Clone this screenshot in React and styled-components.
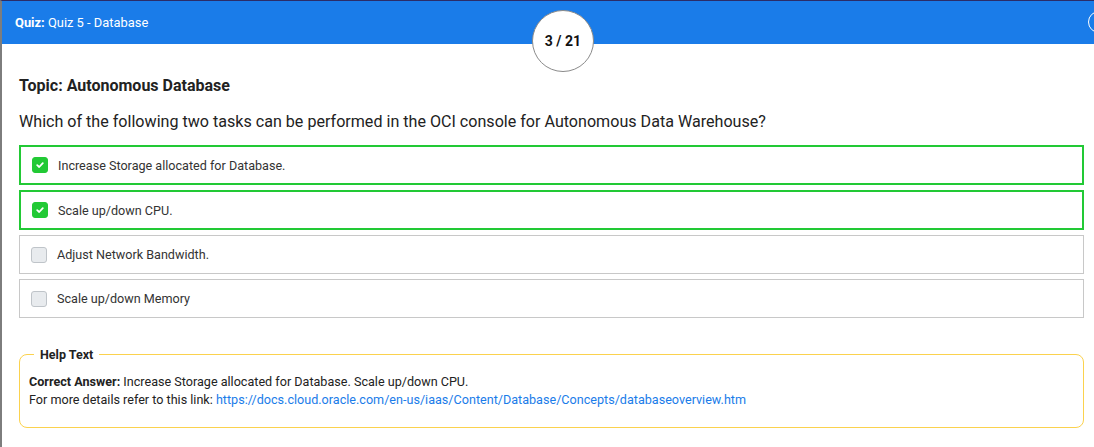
import React from 'react'
import styled, { createGlobalStyle } from 'styled-components'

const GlobalStyle = createGlobalStyle`
    body {
        margin: 0;
        font-family: Roboto, "Liberation Sans", sans-serif;
        background: #ffffff;
        overflow: hidden;
    }
`

const options = [
    { text: 'Increase Storage allocated for Database.', correct: true },
    { text: 'Scale up/down CPU.', correct: true },
    { text: 'Adjust Network Bandwidth.', correct: false },
    { text: 'Scale up/down Memory', correct: false },
]

function Check() {
    return (
        <svg width="10" height="10" viewBox="0 0 10 10">
            <path d="M2.2 5.2 L4.2 7 L7.8 3.2" fill="none" stroke="#fff" strokeWidth="1.8" strokeLinecap="round" strokeLinejoin="round" />
        </svg>
    )
}

function App() {
    return (
        <Page>
            <GlobalStyle />
            <Header>
                <Title><b>Quiz:</b> Quiz 5 - Database</Title>
                <Close />
                <Counter>3 / 21</Counter>
            </Header>
            <Body>
                <Topic>Topic: Autonomous Database</Topic>
                <Question>Which of the following two tasks can be performed in the OCI console for Autonomous Data Warehouse?</Question>
                <Options>
                    {options.map((o) => (
                        <Option key={o.text} correct={o.correct}>
                            <Box correct={o.correct}>{o.correct && <Check />}</Box>
                            <span>{o.text}</span>
                        </Option>
                    ))}
                </Options>
                <Help>
                    <Legend>Help Text</Legend>
                    <HelpLine><b>Correct Answer:</b> Increase Storage allocated for Database. Scale up/down CPU.</HelpLine>
                    <HelpLine>
                        For more details refer to this link:{' '}
                        <Link href="#">https://docs.cloud.oracle.com/en-us/iaas/Content/Database/Concepts/databaseoverview.htm</Link>
                    </HelpLine>
                </Help>
            </Body>
        </Page>
    )
}

export default App

const Page = styled.div`
    height: 446px;
    border-top: 1px solid #2b2c68;
    border-left: 2px solid #7d7d7d;
    background: #fff;
`

const Header = styled.div`
    position: relative;
    height: 43px;
    background-color: #1a7ce9;
    display: flex;
    align-items: center;
    justify-content: space-between;
    padding-left: 13px;
`

const Title = styled.div`
    color: #fff;
    font-size: 12.9px;
    b {
        font-weight: 700;
    }
`

const Close = styled.div`
    width: 20px;
    height: 20px;
    border: 1.5px solid #fff;
    border-radius: 50%;
    margin-right: -16px;
    margin-top: -1px;
`

const Counter = styled.div`
    position: absolute;
    left: 530px;
    top: 9px;
    width: 62px;
    height: 62px;
    box-sizing: border-box;
    border-radius: 50%;
    border: 1px solid #8a8a8a;
    background: #fff;
    display: flex;
    align-items: center;
    justify-content: center;
    font-size: 14px;
    font-weight: 700;
    color: #111;
    z-index: 2;
`

const Body = styled.div`
    padding: 32px 10px 0 17px;
`

const Topic = styled.div`
    font-size: 16px;
    font-weight: 700;
    color: #222;
    line-height: 20px;
`

const Question = styled.div`
    margin-top: 16px;
    font-size: 16.1px;
    color: #222;
    line-height: 20px;
`

const Options = styled.div`
    margin-top: 13px;
    display: flex;
    flex-direction: column;
    gap: 5px;
`

const Option = styled.div`
    height: ${(p) => (p.correct ? '40px' : '39px')};
    box-sizing: border-box;
    border: ${(p) => (p.correct ? '2px solid #22c935' : '1px solid #c8c8c8')};
    padding-left: 11px;
    display: flex;
    align-items: center;
    gap: 10px;
    font-size: 12.6px;
    color: #333;
`

const Box = styled.div`
    width: 16px;
    height: 16px;
    box-sizing: border-box;
    border-radius: 3px;
    background: ${(p) => (p.correct ? '#22c935' : '#e8ebee')};
    border: 1px solid ${(p) => (p.correct ? '#22c935' : '#bfc4c9')};
    display: flex;
    align-items: center;
    justify-content: center;
`

const Help = styled.fieldset`
    margin: 29px 0 0 0;
    padding: 11px 9px 18px 9px;
    border: 1px solid #fbd24e;
    border-radius: 8px;
`

const Legend = styled.legend`
    font-size: 12.5px;
    font-weight: 700;
    color: #222;
    padding: 0 6px;
    margin-left: 5px;
`

const HelpLine = styled.div`
    font-size: 12.6px;
    line-height: 18px;
    color: #222;
`

const Link = styled.a`
    color: #1a7ce9;
    text-decoration: none;
`
